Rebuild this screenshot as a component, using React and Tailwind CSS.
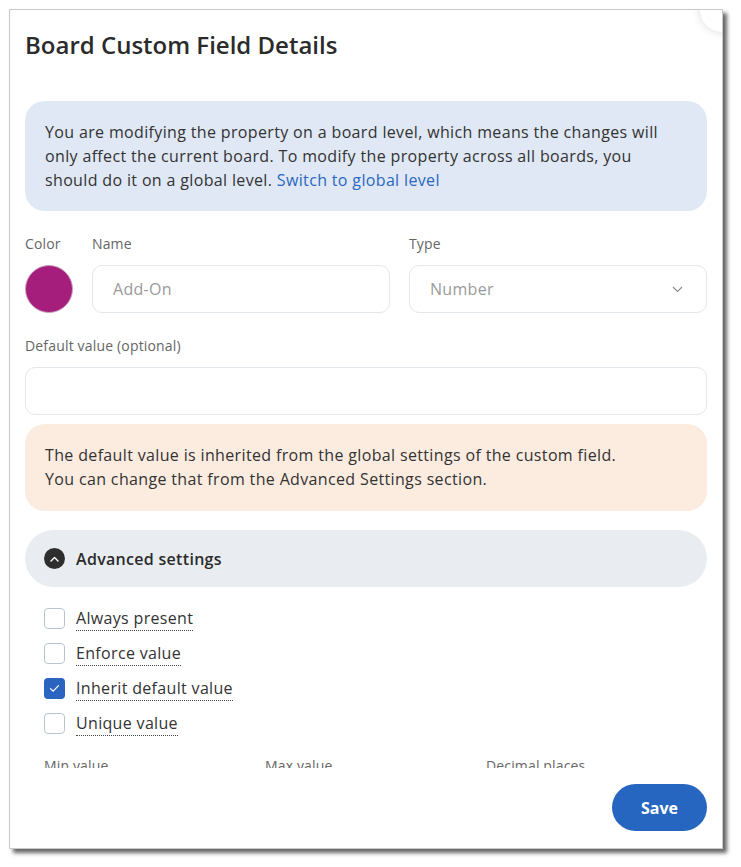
import React from "react";

const F = { fontFamily: '"Open Sans", "Noto Sans", sans-serif' };

function Check({ checked, label }) {
  return (
    <div className="flex items-center h-[25px]">
      {checked ? (
        <div className="w-[21px] h-[21px] rounded-[4px] bg-[#2a63c0] flex items-center justify-center">
          <svg width="11" height="9" viewBox="0 0 11 9" fill="none">
            <path d="M1.5 4.6 L4.2 7.2 L9.5 1.6" stroke="white" strokeWidth="1.2" strokeLinecap="round" strokeLinejoin="round" />
          </svg>
        </div>
      ) : (
        <div className="w-[21px] h-[21px] rounded-[4px] border border-[#b8c5ce] bg-white" />
      )}
      <span className="ml-[11px] text-[16px] leading-[24px] tracking-[0.33px] text-[#333] border-b border-dotted border-[#444]">
        {label}
      </span>
    </div>
  );
}

export default function App() {
  return (
    <div className="w-[741px] h-[867px] bg-white relative" style={F}>
      <div className="absolute left-[9px] top-[9px] w-[714px] h-[840px] bg-white border border-[#c9c9c9] shadow-[4px_4px_4px_rgba(0,0,0,0.6)] overflow-hidden flex flex-col">
        <div className="absolute right-[-22px] top-[-22px] w-[44px] h-[44px] rounded-full bg-white shadow-[0_0_10px_rgba(0,0,0,0.15)]" />
        <div className="px-[15px] pt-[20px] h-[50px] shrink-0">
          <h1 className="text-[24px] leading-[30px] font-semibold text-[#2b2b2b]">Board Custom Field Details</h1>
        </div>
        <div className="px-[15px] h-[708px] overflow-hidden shrink-0">
          <div className="mt-[41px] h-[110px] rounded-[20px] bg-[#dfe8f4] px-5 py-[19px] text-[16px] leading-[24px] tracking-[0.35px] text-[#333]">
            You are modifying the property on a board level, which means the changes will only affect the current board. To modify the property across all boards, you should do it on a global level.{" "}
            <span className="text-[#2a67c0]">Switch to global level</span>
          </div>

          <div className="mt-[23px] flex gap-[19px]">
            <div className="w-[48px] shrink-0">
              <div className="text-[14px] leading-[20px] tracking-[0.15px] text-[#666]">Color</div>
              <div className="mt-[11px] w-[48px] h-[48px] rounded-full bg-[#a51e7b] border border-[#c9a0bd]" />
            </div>
            <div className="flex-1">
              <div className="text-[14px] leading-[20px] tracking-[0.15px] text-[#666]">Name</div>
              <div className="mt-[11px] h-[48px] rounded-[10px] border border-[#e2e7eb] flex items-center px-5 text-[16px] tracking-[0.3px] text-[#9a9a9a]">
                Add-On
              </div>
            </div>
            <div className="flex-1">
              <div className="text-[14px] leading-[20px] tracking-[0.15px] text-[#666]">Type</div>
              <div className="mt-[11px] h-[48px] rounded-[10px] border border-[#e2e7eb] flex items-center justify-between pl-5 pr-[23px] text-[16px] tracking-[0.3px] text-[#9a9a9a]">
                <span>Number</span>
                <svg width="11" height="7" viewBox="0 0 11 7" fill="none">
                  <path d="M1 1 L5.5 5.5 L10 1" stroke="#8a8a8a" strokeWidth="1.1" />
                </svg>
              </div>
            </div>
          </div>

          <div className="mt-[23px] text-[14px] leading-[20px] tracking-[0.17px] text-[#666]">Default value (optional)</div>
          <div className="mt-[11px] h-[48px] rounded-[10px] border border-[#e2e7eb]" />

          <div className="mt-[9px] h-[87px] rounded-[20px] bg-[#fcebdf] px-5 py-[19px] text-[16px] leading-[24px] tracking-[0.35px] text-[#333]">
            The default value is inherited from the global settings of the custom field.
            <br />
            You can change that from the Advanced Settings section.
          </div>

          <div className="mt-[19px] h-[57px] rounded-full bg-[#e9edf1] flex items-center pl-[19px]">
            <div className="w-[21px] h-[21px] rounded-full bg-[#2e2e2e] flex items-center justify-center">
              <svg width="9" height="6" viewBox="0 0 9 6" fill="none">
                <path d="M1 5 L4.5 1.5 L8 5" stroke="white" strokeWidth="1.4" strokeLinecap="round" strokeLinejoin="round" />
              </svg>
            </div>
            <span className="ml-[11px] text-[16px] font-semibold tracking-[0.3px] text-[#2b2b2b]">Advanced settings</span>
          </div>

          <div className="mt-[19px] pl-[19px] flex flex-col gap-[10px]">
            <Check label="Always present" />
            <Check label="Enforce value" />
            <Check checked label="Inherit default value" />
            <Check label="Unique value" />
          </div>

          <div className="mt-[20px] px-[19px] grid grid-cols-3 gap-[19px] text-[14px] leading-[20px] tracking-[0.15px] text-[#666]">
            <div>Min value</div>
            <div>Max value</div>
            <div>Decimal places</div>
          </div>
        </div>
        <div className="flex-1 flex justify-end items-start pt-[16px] pr-[15px]">
          <button className="h-[47px] w-[95px] rounded-full bg-[#2766c0] text-white text-[16px] font-bold">Save</button>
        </div>
      </div>
    </div>
  );
}
